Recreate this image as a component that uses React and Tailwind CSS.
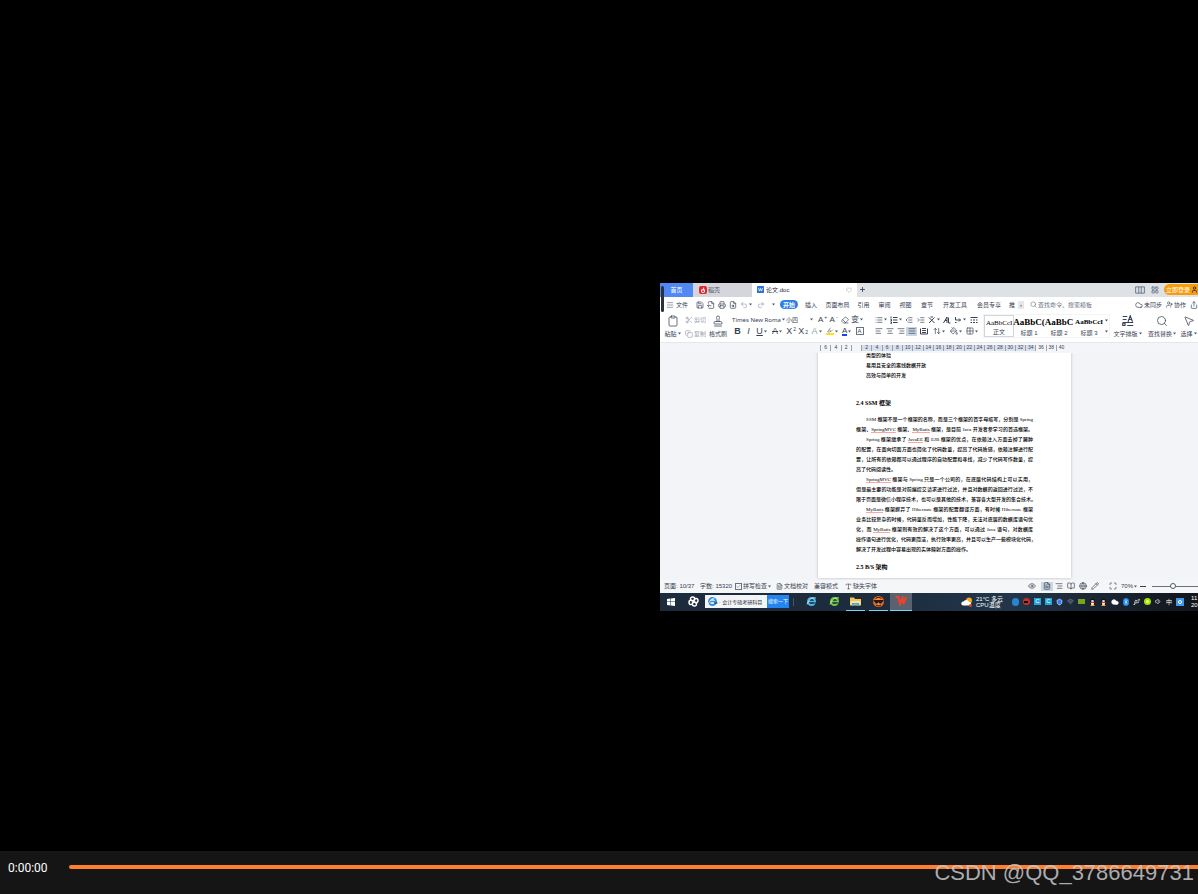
import React, { useState } from 'react';
import {
  AlignCenter, AlignJustify, AlignLeft, AlignRight, BookOpen, Check, Clipboard, Cloud, Copy,
  Eraser, Eye, FileSearch, FileText, Globe, Grid2x2, Heart, Highlighter, IndentDecrease, IndentIncrease,
  LayoutGrid, List, Maximize, Menu, MousePointer2, PaintBucket, Pencil, Plus, Printer, Redo2, Save,
  FileOutput, Scissors, Search, Share, Stamp, Type, Undo2, User, UserPlus, ArrowUpDown, Bluetooth,
  Shield, Usb, Volume1, Wifi,
} from 'lucide-react';

const MENUS = [
  ['插入', 'w-[22px]'], ['页面布局', 'w-[31px]'], ['引用', 'w-[21px]'], ['审阅', 'w-[21px]'],
  ['视图', 'w-[21px]'], ['章节', 'w-[22px]'], ['开发工具', 'w-[34px]'], ['会员专享', 'w-[34px]'], ['推', 'w-3'],
];

const QUICK = [
  ['保存', Save], ['输出', FileOutput], ['打印', Printer], ['预览', FileSearch],
];

const STYLES = [
  ['AaBbCcI', '正文', 'border border-gray-300', 'text-[7px]'],
  ['AaBbC(', '标题 1', '', 'text-[9px] font-bold'],
  ['AaBbC', '标题 2', '', 'text-[9px] font-bold'],
  ['AaBbCcI', '标题 3', '', 'text-[7px] font-bold'],
];

const RULER = ['6', '4', '2', '', '2', '4', '6', '8', '10', '12', '14', '16', '18', '20', '22', '24', '26', '28', '30', '32', '34', '36', '38', '40'];

// i = first line of a paragraph, e = last line; words between * are spell-check hits
const LINES = [
  ['i', 'SSM 框架不是一个框架的名称，而是三个框架的首字母缩写，分别是 Spring'],
  ['e', '框架、*SpringMVC* 框架、*MyBatis* 框架，是目前 Java 开发者参学习的首选框架。', true],
  ['i', 'Spring 框架继承了 *JavaEE* 和 EJB 框架的优点，在依赖注入方面去掉了臃肿'],
  ['', '的配置，在面向切面方面也简化了代码数量，提高了代码质感，依赖注解进行配'],
  ['', '置，让所有的依赖都可以通过程序的自动配置和寻找，减少了代码写作数量，提'],
  ['e', '高了代码阅读性。'],
  ['i', '*SpringMVC* 框架与 Spring 只是一个公司的，在底层代码结构上可以实用，'],
  ['', '但是最主要的功能是对前端提交请求进行过滤，并且对数据的返回进行过滤，不'],
  ['', '限于页面是微信小程序技术，也可以是其他的技术，兼容各大型开发的集合技术。'],
  ['i', '*MyBatis* 框架摒弃了 Hibernate 框架的配置翻译方面，有时候 Hibernate 框架'],
  ['', '业务比较复杂的时候，代码量反而增加，性能下降，无法对底层的数据库语句优'],
  ['', '化，而 *MyBatis* 框架则有效的解决了这个方面，可以通过 Java 语句，对数据库'],
  ['', '操作语句进行优化，代码更简洁，执行效率更高，并且可以生产一些模块化代码，'],
  ['e', '解决了开发过程中容易出现的实体映射方面的操作。'],
];

const Arrow = () => (
  <svg className="w-[3px] h-[3px] shrink-0 fill-gray-600" viewBox="0 0 6 6"><path d="M0 1h6L3 5z" /></svg>
);

// Line drawings on a 16 unit grid
const glyph = d => ({ className, strokeWidth = 1.5 }) => (
  <svg className={className} viewBox="0 0 16 16" fill="none" stroke="currentColor" strokeWidth={strokeWidth}><path d={d} /></svg>
);

const TextLayout = glyph('M1 2h6M1 6h5M1 10h14M1 14h3v-3H1zM7 14h8M8 9l3-8 3 8M9 6h4');
const Crossed = glyph('M2 3l11 11M13 3L2 14M5 2h5');
const Numbered = glyph('M2 1v4M1 7h2v3H1M1 12h2v3H1M6 3h9M6 8h9M6 13h9');
const SortAZ = glyph('M1 14L8 2v12M4 9h4M11 14V3M11 14h4');
const Newline = glyph('M3 2v6h10M10 5l3 3-3 3M2 13h3');
const Tabs = glyph('M1 3h14M1 8h3M6 8h4M12 8h3M1 13h3M6 13h4M12 13h3');
const Spread = glyph('M1 3v11h14V3M4 3h8M4 7h8M4 11h8');
const Panes = glyph('M1 3h14v10H1zM6 3v10M10 3v10');

// Icon button of the ribbon; w sets its cell width
const Tool = ({ label, icon: Icon, w = 'w-[11px]', arrow, on, children }) => (
  <button aria-label={label}
    className={`${w} h-[9px] shrink-0 flex items-center justify-center gap-px leading-none ${on ? 'bg-slate-300' : ''}`}>
    {Icon ? <Icon className="w-2 h-2 shrink-0" strokeWidth={2} /> : children}
    {arrow && <Arrow />}
  </button>
);

const BigTool = ({ icon: Icon, label, w, arrow }) => (
  <button className={`${w} shrink-0 flex flex-col items-center justify-between pb-px leading-none whitespace-nowrap`}>
    <Icon className="w-3 h-3" strokeWidth={1.5} />
    <span className="flex items-center gap-px">{label}{arrow && <Arrow />}</span>
  </button>
);

const TabBar = () => (
  <div className="h-[14px] flex items-stretch bg-[#dfe2e5] text-[6px] leading-none">
    <button className="w-[33px] shrink-0 bg-[#5288f5] text-white">首页</button>
    <button className="w-[59px] shrink-0 bg-[#d5d5dc] flex items-center gap-px px-[6px] text-gray-600">
      <svg className="w-2 h-2" viewBox="0 0 16 16">
        <rect width="16" height="16" rx="4" fill="#e0262c" />
        <path d="M8 2c1 3 4 4 4 8a4 4 0 0 1-8 0c0-2 1-3 2-4l1 2c1-2 1-4 1-6z" fill="#fff" />
        <circle cx="8" cy="10.500" r="2" fill="#e0262c" />
      </svg>
      稻壳
    </button>
    <button className="w-[105px] shrink-0 bg-white flex items-center gap-[2px] px-[5px] text-gray-800">
      <svg className="w-[7px] h-[7px]" viewBox="0 0 14 14">
        <rect width="14" height="14" rx="1" fill="#2f74d8" />
        <path d="M3 4l2 6 2-5 2 5 2-6" fill="none" stroke="#fff" strokeWidth="1.500" />
      </svg>
      论文.doc
      <Heart className="w-[6px] h-[6px] ml-auto text-gray-400" />
    </button>
    <button aria-label="新建" className="w-[10px] flex items-center justify-center text-gray-700">
      <Plus className="w-[7px] h-[7px]" strokeWidth={3} />
    </button>
    <div className="ml-auto flex items-center gap-[5px] text-slate-500">
      <Panes className="w-3 h-[10px]" />
      <LayoutGrid className="w-2 h-2" strokeWidth={2.5} />
      <button className="h-[11px] w-[34px] rounded-l-full bg-[#f79d0c] text-white flex items-center justify-end gap-px">
        立即登录 <User className="w-[7px] h-[7px] shrink-0 text-gray-800" strokeWidth={3} />
      </button>
    </div>
  </div>
);

const MenuBar = () => (
  <div className="h-4 flex items-center bg-white text-[6px] leading-none whitespace-nowrap">
    <button className="w-[34px] pl-[6px] shrink-0 flex items-center gap-[2px]">
      <Menu className="w-2 h-2" strokeWidth={1.5} />文件
    </button>
    {QUICK.map(([label, icon]) => <Tool key={label} label={label} icon={icon} />)}
    <Tool label="撤销" w="w-4"><Undo2 className="w-2 h-2 text-gray-400" /><Arrow /></Tool>
    <Tool label="恢复" w="w-[14px]"><Redo2 className="w-2 h-2 text-gray-400" /></Tool>
    <Tool label="更多" w="w-[10px]"><Arrow /></Tool>
    <button className="w-[18px] h-[9px] mx-[2px] shrink-0 rounded-full bg-[#2e7fe6] text-white font-bold">开始</button>
    {MENUS.map(([label, w]) => <button key={label} className={`${w} shrink-0 text-center`}>{label}</button>)}
    <button aria-label="展开" className="w-[6px] h-2 bg-gray-200 text-center">›</button>
    <label className="flex items-center gap-px ml-[6px] text-gray-500">
      <Search className="w-[7px] h-[7px]" />
      <input className="w-[56px] text-[6px] placeholder:text-gray-500" placeholder="查找命令、搜索模板" aria-label="查找命令" />
    </label>
    <div className="ml-auto flex items-center gap-1">
      <button className="flex items-center gap-px"><Cloud className="w-2 h-2" />未同步</button>
      <button className="flex items-center gap-px"><UserPlus className="w-[7px] h-[7px]" />协作</button>
      <button aria-label="分享"><Share className="w-2 h-2" /></button>
    </div>
  </div>
);

const Ribbon = () => {
  const [font, setFont] = useState('Times New Roma');
  return (
    <div className="h-[30px] flex items-start pt-px bg-white text-[6px] leading-none whitespace-nowrap border-b border-gray-200">
      <div className="flex h-6 pt-px">
        <BigTool icon={Clipboard} label="粘贴" w="w-[25px]" arrow />
        <div className="w-[22px] flex flex-col justify-between pt-px text-gray-400">
          <button className="flex items-center gap-px"><Scissors className="w-2 h-2" />剪切</button>
          <button className="flex items-center gap-px"><Copy className="w-2 h-2" />复制</button>
        </div>
        <BigTool icon={Stamp} label="格式刷" w="w-[22px]" />
      </div>
      <div className="ml-[3px] w-[138px] shrink-0 flex flex-col">
        <div className="flex items-center h-3">
          <select aria-label="字体" value={font} onChange={e => setFont(e.target.value)}
            className="w-[50px] shrink-0 appearance-none text-[6px] leading-none font-['Noto_Sans',sans-serif]">
            <option>Times New Roma</option>
          </select>
          <Arrow />
          <select aria-label="字号" defaultValue="小四" className="w-[25px] shrink-0 pl-px appearance-none text-[6px] leading-none">
            <option>小四</option>
          </select>
          <Arrow />
          <span className="w-[4px] shrink-0" />
          <Tool label="增大字号"><span className="text-[8px]">A</span><sup className="text-[5px]">+</sup></Tool>
          <Tool label="减小字号"><span className="text-[8px]">A</span><sup className="text-[5px]">-</sup></Tool>
          <Tool label="清除格式" icon={Eraser} />
          <Tool label="拼音" w="w-[14px]" arrow><span className="text-[8px]">变</span></Tool>
        </div>
        <div className="flex items-center h-[11px] text-[9px]">
          <Tool label="加粗"><b>B</b></Tool>
          <Tool label="倾斜"><i>I</i></Tool>
          <Tool label="下划线" w="w-[15px]" arrow><u>U</u></Tool>
          <Tool label="删除线" w="w-4" arrow><s>A</s></Tool>
          <Tool label="上标" w="w-3">X<sup className="text-[5px]">2</sup></Tool>
          <Tool label="下标" w="w-3">X<sub className="text-[5px]">2</sub></Tool>
          <Tool label="文字效果" w="w-[15px]" arrow><span className="text-gray-400">A</span></Tool>
          <Tool label="突出显示" w="w-[15px]" arrow><Highlighter className="w-2 h-2 border-b-2 border-yellow-300" /></Tool>
          <Tool label="字体颜色" w="w-[15px]" arrow><span className="border-b-2 border-blue-700 text-[8px] leading-[7px]">A</span></Tool>
          <Tool label="字符底纹"><span className="border border-gray-500 text-[6px] px-px">A</span></Tool>
        </div>
      </div>
      <div className="ml-[3px] w-[108px] shrink-0 flex flex-col">
        <div className="flex items-center h-3">
          <Tool label="项目符号" icon={List} w="w-[15px]" arrow />
          <Tool label="编号" icon={Numbered} w="w-[15px]" arrow />
          <Tool label="减少缩进" icon={IndentDecrease} w="w-3" />
          <Tool label="增加缩进" icon={IndentIncrease} w="w-3" />
          <Tool label="中文版式" icon={Crossed} w="w-[14px]" arrow />
          <Tool label="排序" icon={SortAZ} w="w-3" />
          <Tool label="换行" icon={Newline} w="w-[14px]" arrow />
          <Tool label="制表位" icon={Tabs} w="w-[14px]" />
        </div>
        <div className="flex items-center h-[11px]">
          <Tool label="左对齐" icon={AlignLeft} />
          <Tool label="居中" icon={AlignCenter} />
          <Tool label="右对齐" icon={AlignRight} />
          <Tool label="两端对齐" icon={AlignJustify} on />
          <Tool label="分散对齐" icon={Spread} w="w-[13px]" />
          <Tool label="行距" icon={ArrowUpDown} w="w-[17px]" arrow />
          <Tool label="底纹" icon={PaintBucket} w="w-[17px]" arrow />
          <Tool label="边框" icon={Grid2x2} w="w-[15px]" arrow />
        </div>
      </div>
      <div className="ml-[2px] h-6 flex shrink-0 border border-gray-100">
        {STYLES.map(([sample, name, box, size]) => (
          <button key={name} className={`w-[30px] flex flex-col items-center justify-between pt-[2px] ${box}`}>
            <span className={`h-[10px] leading-[10px] text-black font-['Liberation_Serif',serif] ${size}`}>{sample}</span>
            <span className="pb-px">{name}</span>
          </button>
        ))}
        <div className="w-[5px] flex flex-col items-center justify-around"><Arrow /><Arrow /></div>
      </div>
      <div className="flex h-6 pt-px ml-auto">
        <BigTool icon={TextLayout} label="文字排版" w="w-[35px]" arrow />
        <BigTool icon={Search} label="查找替换" w="w-[34px]" arrow />
        <BigTool icon={MousePointer2} label="选择" w="w-[19px]" arrow />
      </div>
    </div>
  );
};

const Ruler = () => (
  <div className="h-[10px] flex items-center bg-[#f4f5f8] pl-[160px] text-[5px] leading-none text-gray-700">
    <div className="w-[246px] flex">
      {RULER.map((n, i) => (
        <span key={i}
          className={`flex-1 h-[6px] flex items-center justify-center border-l border-gray-400 ${i > 3 && i < 21 ? 'bg-[#d9e0ec]' : ''}`}>
          {n}
        </span>
      ))}
    </div>
  </div>
);

const Line = ({ kind, text, full }) => (
  <p className={`whitespace-nowrap ${kind === 'i' ? 'pl-[10px]' : ''} ${kind === 'e' && !full ? '' : '[text-align-last:justify]'}`}>
    {text.split('*').map((part, i) => (i % 2
      ? <span key={i} className="border-b border-red-300">{part}</span>
      : part))}
  </p>
);

const Page = () => (
  <div className="h-[227px] overflow-hidden bg-[#f3f4f7] pl-[158px]">
    <article className="w-[253px] h-full px-[38px] bg-white shadow-[0_0_3px_#b8bcc4] text-black text-[5px] leading-[10px] font-medium font-['Liberation_Serif','Noto_Sans_CJK_SC',serif]">
      <div className="pl-[10px] -mt-[2px]">
        <p>类型的体验</p>
        <p>易用且安全的离线数据开放</p>
        <p>高效与简单的开发</p>
      </div>
      <h2 className="mt-[17px] mb-[7px] text-[6px] leading-[10px] font-bold">2.4 SSM 框架</h2>
      {LINES.map(([kind, text, full], i) => <Line key={i} kind={kind} text={text} full={full} />)}
      <h2 className="mt-[7px] text-[6px] leading-[10px] font-bold">2.5 B/S 架构</h2>
    </article>
  </div>
);

const StatusBar = () => (
  <div className="h-[13px] flex items-center pl-1 bg-[#f5f6f8] text-[6px] leading-none whitespace-nowrap">
    <span className="w-9">页面: 10/37</span>
    <span className="w-[35px]">字数: 15320</span>
    <button className="w-[41px] flex items-center gap-px"><Check className="w-[7px] h-[7px] border border-slate-500" />拼写检查<Arrow /></button>
    <button className="w-[38px] flex items-center gap-px"><FileText className="w-[7px] h-[7px]" />文档校对</button>
    <span className="w-[31px]">兼容模式</span>
    <button className="flex items-center gap-px"><Type className="w-[7px] h-[7px]" />缺失字体</button>
    <div className="ml-auto flex items-center">
      <Tool label="护眼模式" icon={Eye} w="w-[18px]" />
      <Tool label="页面视图" icon={FileText} w="w-3" on />
      <Tool label="大纲" icon={AlignRight} w="w-3" />
      <Tool label="阅读版式" icon={BookOpen} w="w-3" />
      <Tool label="Web 版式" icon={Globe} w="w-3" />
      <Tool label="写作模式" icon={Pencil} w="w-3" />
      <span className="w-[6px]" />
      <Tool label="适应窗口" icon={Maximize} />
      <span className="w-[22px] flex items-center justify-center gap-px">70%<Arrow /></span>
      <button aria-label="缩小" className="w-[6px] h-px bg-gray-700 mr-[6px]" />
      <input type="range" aria-label="缩放" defaultValue="44"
        className="w-[46px] h-px appearance-none bg-gray-500 [&::-webkit-slider-thumb]:appearance-none [&::-webkit-slider-thumb]:w-[6px] [&::-webkit-slider-thumb]:h-[6px] [&::-webkit-slider-thumb]:rounded-full [&::-webkit-slider-thumb]:border [&::-webkit-slider-thumb]:border-gray-600 [&::-webkit-slider-thumb]:bg-white" />
    </div>
  </div>
);

const Browser = ({ color }) => (
  <svg className="w-[11px] h-[11px]" viewBox="0 0 22 22" fill="none">
    <circle cx="11" cy="11" r="7" stroke={color} strokeWidth="4" />
    <path d="M6 11h12" stroke={color} strokeWidth="3" />
    <path d="M2 17C5 8 12 2 20 4" stroke="#f1f5c8" strokeWidth="1.500" />
    <path d="M14 14h7" stroke="#1f2f42" strokeWidth="2" />
  </svg>
);

const Penguin = () => (
  <svg className="w-[7px] h-2" viewBox="0 0 14 16">
    <ellipse cx="7" cy="8" rx="5" ry="7" fill="#111" />
    <ellipse cx="7" cy="6" rx="3" ry="2" fill="#ddd" />
    <ellipse cx="7" cy="11" rx="3" ry="4" fill="#fff" />
    <path d="M3 8h8v2H3z" fill="#e23a2e" />
    <path d="M3 15h8" stroke="#f59e0b" strokeWidth="2" />
  </svg>
);

const Taskbar = () => (
  <div className="h-[18px] flex items-center bg-linear-to-r from-[#1d2c3d] from-40% via-[#22354b] via-65% to-[#12151b] text-white text-[6px] leading-none whitespace-nowrap">
    <button aria-label="开始菜单" className="w-[22px] flex justify-center">
      <svg className="w-2 h-2 fill-white" viewBox="0 0 16 16"><path d="M0 2l7-1v6H0zM8 1l8-1v7H8zM0 8h7v7l-7-1zM8 8h8v8l-8-1z" /></svg>
    </button>
    <button aria-label="助手" className="w-[23px] flex justify-center">
      <svg className="w-[11px] h-[11px]" viewBox="0 0 22 22" fill="none" stroke="#fff" strokeWidth="3">
        <path d="M11 11C4 10 3 2 9 2s5 6 2 9zM11 11c1-7 9-8 9-2s-6 5-9 2zM11 11c7 1 8 9 2 9s-5-6-2-9zM11 11c-1 7-9 8-9 2s6-5 9-2z" />
      </svg>
    </button>
    <div className="flex h-[13px] w-[84px] bg-[#f3f4f5] items-center shrink-0">
      <span className="w-[14px] flex justify-center"><Browser color="#2d8fe8" /></span>
      <input aria-label="搜索" defaultValue="· 会计专硕考研科目" className="w-[48px] text-[5px] text-gray-800" />
      <button className="flex-1 h-full bg-[#2484f0] text-[5px]">搜索一下</button>
    </div>
    <span className="w-px h-2 ml-1 mr-[6px] bg-slate-600" />
    <button aria-label="浏览器" className="w-[23px] h-full flex items-center justify-center"><Browser color="#4cb8f0" /></button>
    <button aria-label="360 浏览器" className="w-[23px] h-full flex items-center justify-center"><Browser color="#6ccf3e" /></button>
    <button aria-label="文件夹" className="w-[19px] h-full flex items-center justify-center border-b border-sky-300">
      <svg className="w-[11px] h-[9px]" viewBox="0 0 22 18">
        <path d="M0 1h8l2 3h12v13H0z" fill="#f4c64f" /><path d="M1 8h20v7H1z" fill="#f9e3a0" /><path d="M4 12h14v6h-4v-3H8v3H4z" fill="#4aa5e0" />
      </svg>
    </button>
    <button aria-label="录屏" className="w-[19px] ml-1 mr-[2px] h-full flex items-center justify-center border-b border-sky-300">
      <svg className="w-[11px] h-[11px]" viewBox="0 0 22 22">
        <circle cx="11" cy="11" r="11" fill="#ef6a22" /><circle cx="11" cy="11" r="7" fill="#ef8b3a" />
        <path d="M1 8h20v3h-2l-2 4-4 0-2-3-2 3H5l-2-4H1z" fill="#28180f" /><path d="M5 5c3-3 9-3 12 0M6 18c3 2 7 2 10 0" stroke="#28180f" strokeWidth="2" fill="none" />
      </svg>
    </button>
    <button aria-label="WPS" className="w-[22px] h-full flex items-center justify-center bg-[#59636f] border-b border-sky-300">
      <svg className="w-3 h-[10px]" viewBox="0 0 24 20" fill="none" stroke="#f0412f" strokeWidth="4"><path d="M1 2h6l3 14 5-13 2 13 5-14" /></svg>
    </button>
    <div className="ml-auto flex items-center">
      <svg className="w-3 h-[10px] mr-[2px]" viewBox="0 0 24 20">
        <circle cx="16" cy="7" r="6" fill="#f5a623" /><path d="M4 17a4 4 0 0 1 1-8 6 6 0 0 1 11 1 4 4 0 0 1 3 7z" fill="#fff" /><circle cx="19" cy="17" r="3" fill="#e23a2e" />
      </svg>
      <div className="w-[37px] pl-px text-[6px] leading-[6px]">
        <p>21°C 多云</p>
        <p>CPU温度</p>
      </div>
      <div className="flex items-center gap-1">
        <span className="w-[7px] h-2 rounded bg-[#2b84cf]" />
        <span className="w-[7px] h-[7px] rounded-full bg-[#d42c24] flex items-center justify-center"><span className="w-1 h-[2px] bg-black" /></span>
        <span className="w-[7px] h-[7px] bg-[#28a4d8] text-[6px] leading-[7px] text-center">C</span>
        <span className="w-[7px] h-[7px] bg-[#28a4d8] text-[6px] leading-[7px] text-center">C</span>
        <Shield className="w-[7px] h-2 fill-blue-500" />
        <Wifi className="w-[7px] h-[7px] text-gray-400" />
        <span className="w-[7px] h-[5px] bg-[#76a51c]" />
        <Penguin />
        <Penguin />
        <Cloud className="w-2 h-2 fill-white" />
        <span className="w-[6px] h-2 rounded-full bg-[#1b86e8] flex items-center justify-center"><Bluetooth className="w-[6px] h-[6px]" /></span>
        <Usb className="w-[7px] h-2" />
        <span className="w-[7px] h-[7px] rounded-full border-2 border-lime-400 bg-yellow-200" />
        <Volume1 className="w-[7px] h-[7px]" />
        <span>中</span>
        <span className="w-2 h-2 bg-[#3f95ea] flex items-center justify-center"><span className="w-1 h-1 rounded-full border border-white" /></span>
      </div>
      <div className="ml-[7px] w-[7px] leading-[7px]">
        <p>11</p>
        <p>20</p>
      </div>
    </div>
  </div>
);

const App = () => {
  const [time, setTime] = useState(0);

  return (
    <div className="relative min-h-screen flex flex-col bg-black overflow-hidden font-['Liberation_Sans','Noto_Sans_CJK_SC',sans-serif]">
      {/* ── Stage ── */}
      <main className="flex-1 flex items-center justify-end pt-[42px]">
        <div className="relative w-[44.9%] overflow-hidden bg-white text-gray-700">
          <TabBar />
          <MenuBar />
          <Ribbon />
          <Ruler />
          <Page />
          <StatusBar />
          <Taskbar />
          <span className="absolute left-px top-[3px] w-[3px] h-[26px] rounded-full bg-[#28323a]" />
        </div>
      </main>

      {/* ── Player controls ── */}
      <footer className="h-[43px] bg-[#151515]">
        <div className="h-8 flex items-center pl-2">
          <label htmlFor="seek" className="w-[61px] shrink-0 pt-px text-xs text-white font-[Roboto,sans-serif]">0:00:00</label>
          <input id="seek" type="range" min="0" max="100" value={time} onChange={e => setTime(+e.target.value)}
            className="flex-1 min-w-0 h-1 appearance-none rounded-l-sm bg-[#ff7f2e] [&::-webkit-slider-thumb]:appearance-none [&::-webkit-slider-thumb]:w-0" />
        </div>
      </footer>

      <span className="absolute right-1 bottom-[7px] text-[22px] leading-7 text-[#c8c8c8]/85 pointer-events-none">
        CSDN @QQ_3786649731
      </span>
    </div>
  );
};

export default App;
